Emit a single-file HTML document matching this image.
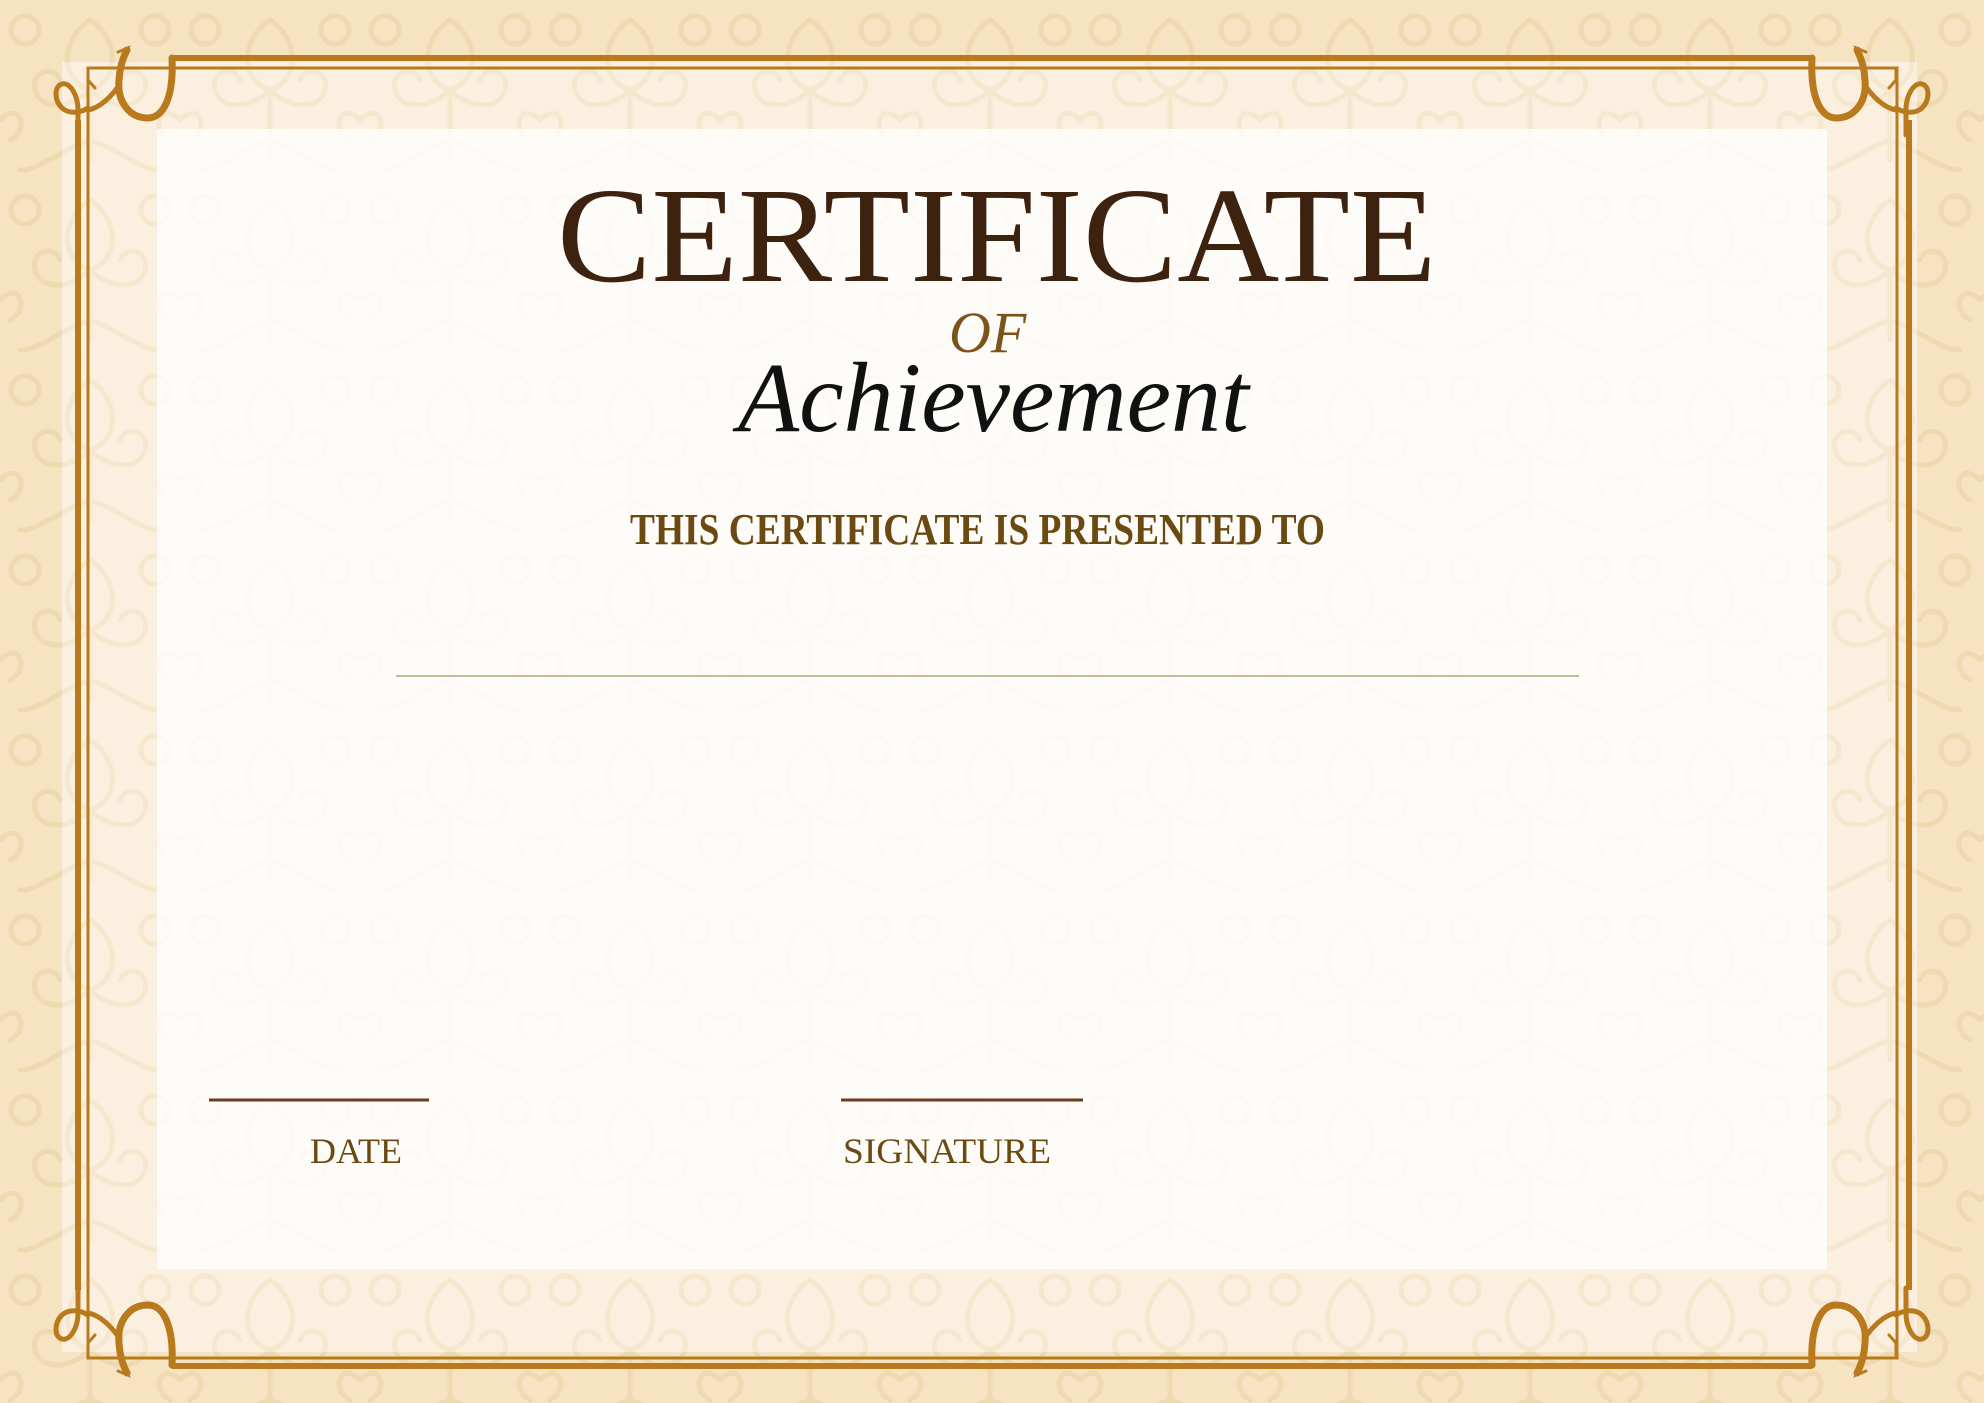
<!DOCTYPE html>
<html><head><meta charset="utf-8">
<style>
html,body{margin:0;padding:0;}
body{width:1984px;height:1403px;position:relative;overflow:hidden;background:#f6e4c2;font-family:"Liberation Serif",serif;}
svg.bg{position:absolute;left:0;top:0;}
.t{position:absolute;white-space:nowrap;}
</style></head><body>
<svg class="bg" width="1984" height="1403" viewBox="0 0 1984 1403">
<defs>
<pattern id="dm" width="180" height="180" patternUnits="userSpaceOnUse">
<g fill="none" stroke="#e6cc9c" stroke-width="5" stroke-linecap="round">
<path d="M90 20 C60 40 60 80 90 90 C120 80 120 40 90 20"/>
<path d="M90 90 C70 110 40 110 35 90 C30 70 55 65 60 80"/>
<path d="M90 90 C110 110 140 110 145 90 C150 70 125 65 120 80"/>
<path d="M90 90 L90 160"/>
<path d="M90 140 C60 150 40 170 20 170"/>
<path d="M90 140 C120 150 140 170 160 170"/>
<circle cx="25" cy="30" r="14"/>
<circle cx="155" cy="30" r="14"/>
<path d="M0 120 C20 100 30 130 10 140"/>
<path d="M180 120 C160 100 150 130 170 140"/>
</g>
</pattern>
</defs>
<rect width="1984" height="1403" fill="#f5e3c1"/>
<rect width="1984" height="1403" fill="url(#dm)" opacity="0.45"/>
<rect x="62" y="62" width="1855" height="1290" fill="#fbf0e0"/>
<rect x="62" y="62" width="1855" height="1290" fill="url(#dm)" opacity="0.25"/>
<rect x="157" y="129" width="1670" height="1140" fill="#fefcf9"/>
<rect x="157" y="129" width="1670" height="1140" fill="url(#dm)" opacity="0.04"/>
<g fill="none" stroke="#b87a1c">
<rect x="88" y="68" width="1809" height="1290" stroke-width="3"/>
<path d="M172 58 H1812 M1909 120 V1290 M1812 1366 H172 M78 1290 V120" stroke-width="6"/>
</g>
<g id="corner" fill="none" stroke="#b87a1c" stroke-linecap="round">
<path d="M172 58 C174 100 162 118 148 118 C128 118 117 100 119 80 C120 66 123 58 127 50" stroke-width="7"/>
<path d="M118 52 L128 48 L124 58" stroke-width="3"/>
<path d="M88 110 C100 108 112 96 120 84" stroke-width="5"/>
<path d="M78 135 L78 110 C78 95 70 82 62 84 C54 86 54 100 62 108 C70 115 82 112 88 108" stroke-width="5"/>
<path d="M88 68 L88 80 L95 88" stroke-width="3"/>
</g>
<use href="#corner" transform="translate(1984 0) scale(-1 1)"/>
<use href="#corner" transform="translate(0 1423) scale(1 -1)"/>
<use href="#corner" transform="translate(1984 1423) scale(-1 -1)"/>
<line x1="396" y1="676" x2="1579" y2="676" stroke="#c9b99a" stroke-width="2"/>
<line x1="209" y1="1100" x2="429" y2="1100" stroke="#6e3d1e" stroke-width="3"/>
<line x1="841" y1="1100" x2="1083" y2="1100" stroke="#6e3d1e" stroke-width="3"/>
</svg>
<div class="t" style="left:557px;top:166px;font-size:136px;line-height:140px;color:#3e2210;transform:scaleX(1.04);transform-origin:0 0;">CERTIFICATE</div>
<div class="t" style="left:949px;top:303px;font-size:58px;line-height:60px;font-style:italic;color:#7a5418;">OF</div>
<div class="t" style="left:738px;top:345px;font-size:100px;line-height:106px;font-style:italic;color:#111;">Achievement</div>
<div class="t" style="left:630px;top:505px;font-size:44px;line-height:50px;font-weight:bold;color:#6b4a12;transform:scaleX(0.85);transform-origin:0 0;">THIS CERTIFICATE IS PRESENTED TO</div>
<div class="t" style="left:310px;top:1131px;font-size:36px;line-height:40px;color:#6b4a12;">DATE</div>
<div class="t" style="left:843px;top:1131px;font-size:36px;line-height:40px;color:#6b4a12;transform:scaleX(1.04);transform-origin:0 0;">SIGNATURE</div>
</body></html>
